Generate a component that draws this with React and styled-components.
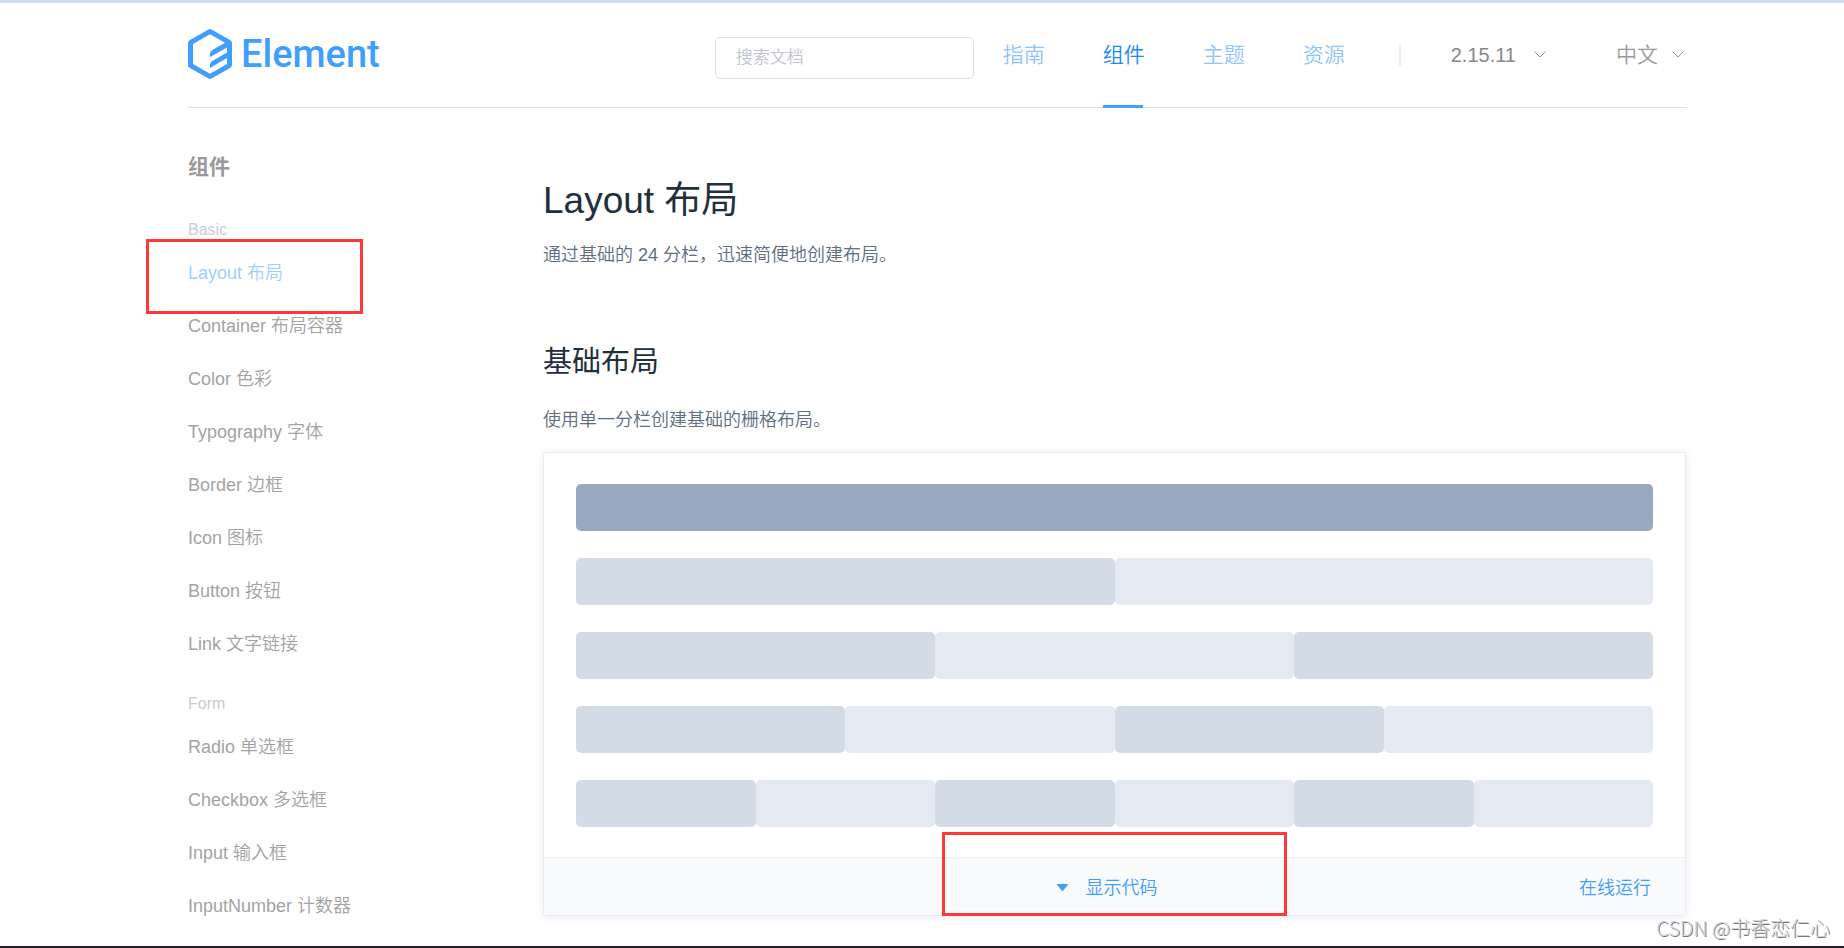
import styled, { createGlobalStyle, css } from 'styled-components';

const primary = '#409eff';

const GlobalStyle = createGlobalStyle`
  *,
  *::before,
  *::after {
    box-sizing: border-box;
  }

  body {
    margin: 0;
    background: #fff;
    font-family: 'Liberation Sans', 'Noto Sans CJK SC', sans-serif;
    font-weight: 350;
  }

  a {
    text-decoration: none;
  }

  ul {
    list-style: none;
    margin: 0;
    padding: 0;
  }
`;

const Page = styled.div`
  position: relative;
  height: 100vh;
  padding-left: 30px;
  overflow: hidden;
  border-top: 3px solid #ccddf7;
  border-bottom: 2px solid #211f22;
`;

const Container = styled.div`
  width: 90%;
  max-width: 1498px;
  margin: 0 auto;
`;

const Header = styled.header`
  display: flex;
  align-items: center;
  height: 105px;
  border-bottom: 1px solid #dcdfe6;
`;

const Logo = styled.a`
  display: flex;
  align-items: center;
  gap: 9px;
  margin: 0 auto 2px 0;
  color: ${primary};
  font: 500 38px/50px Roboto, sans-serif;
`;

const Search = styled.input`
  width: 259px;
  height: 42px;
  margin-top: 6px;
  padding: 0 20px;
  border: 1px solid #dcdfe6;
  border-radius: 5px;
  background: #fff;
  color: #606266;
  font-family: inherit;
  font-size: 17px;
  font-weight: 350;
  outline: none;

  &::placeholder {
    color: #c0c4cc;
  }
`;

const Nav = styled.nav`
  display: flex;
  align-self: stretch;
  gap: 60px;
  margin-left: 29px;
`;

const NavLink = styled.a`
  width: 40px;
  height: 105px;
  line-height: 104px;
  font-size: 21px;
  white-space: nowrap;
  color: ${p => (p.$active ? '#1989fa' : '#8cc5ff')};
  border-bottom: 3px solid ${p => (p.$active ? primary : 'transparent')};
`;

const Separator = styled.span`
  width: 2px;
  height: 21px;
  margin: 0 50px 0 56px;
  background: #ebebeb;
`;

const Dropdown = styled.button`
  display: flex;
  align-items: center;
  gap: ${p => (p.$strong ? 18 : 14)}px;
  padding: 0 2px 0 0;
  border: 0;
  background: none;
  color: ${p => (p.$strong ? '#888' : '#999')};
  font-family: inherit;
  font-size: ${p => (p.$strong ? 20 : 21)}px;
  font-weight: 350;
  line-height: 30px;

  & + & {
    margin-left: 68px;
  }
`;

const Body = styled.div`
  display: flex;
`;

const Sidebar = styled.aside`
  flex: 0 0 355px;
  padding-top: 42px;
`;

const SideTitle = styled.h2`
  margin: 0 0 29px;
  font-size: 21px;
  font-weight: 700;
  line-height: 34px;
  color: #999;
`;

const Group = styled.section`
  margin-bottom: 16px;
`;

const GroupTitle = styled.h3`
  margin: 0;
  font-size: 16px;
  font-weight: 350;
  line-height: 34px;
  color: #ccc;
`;

const highlight = css`
  position: relative;

  &::after {
    content: '';
    position: absolute;
    border: 3px solid #fd3838;
    pointer-events: none;
  }
`;

const SideItem = styled.li`
  font-size: 18px;
  line-height: 53px;

  a {
    color: ${p => (p.$active ? '#a0cfff' : '#a3a3a3')};
  }

  ${p => p.$active && css`
    ${highlight}

    &::after {
      top: -8px;
      left: -42px;
      width: 217px;
      height: 75px;
    }
  `}
`;

const Content = styled.main`
  flex: 1;
  min-width: 0;
  padding-top: 66px;
  color: #5e6d82;
`;

const Title = styled.h1`
  margin: 0 0 12px;
  font-size: 37px;
  font-weight: 400;
  line-height: 54px;
  color: #1f2f3d;
`;

const Heading = styled.h2`
  margin: 71px 0 22px;
  font-size: 29px;
  font-weight: 400;
  line-height: 42px;
  color: #1f2f3d;
`;

const Text = styled.p`
  margin: 0 0 17px;
  font-size: 18px;
  line-height: 30px;
`;

const Demo = styled.section`
  border: 1px solid #ebebeb;
  border-radius: 3px;
  box-shadow: 0 0 10px rgba(232, 237, 250, 0.6), 0 2px 5px rgba(232, 237, 250, 0.5);
`;

const Rows = styled.div`
  display: grid;
  gap: 27px;
  padding: 31px 32px 30px;
`;

const Row = styled.div`
  display: flex;
`;

const Col = styled.div`
  flex: 1;
  height: 47px;
  border-radius: 5px;
  background: ${p => p.$color};
`;

const DemoFooter = styled.div`
  display: grid;
  grid-template-columns: 1fr 345px 1fr;
  align-items: center;
  height: 58px;
  padding-top: 2px;
  border-top: 1px solid #eaeefb;
  background: #f9fafc;
`;

const TextButton = styled.button`
  border: 0;
  padding: 0;
  background: none;
  color: ${primary};
  font-family: inherit;
  font-size: 18px;
  font-weight: 350;
  line-height: 30px;
`;

const ToggleButton = styled(TextButton)`
  grid-column: 2;
  display: flex;
  align-items: center;
  justify-content: center;
  gap: 17px;
  padding-right: 16px;
  ${highlight}

  &::after {
    top: -41px;
    left: 0;
    width: 345px;
    height: 84px;
  }
`;

const RunButton = styled(TextButton)`
  justify-self: end;
  margin-right: 34px;
`;

const Watermark = styled.span`
  position: absolute;
  right: 14px;
  bottom: 3px;
  font: 300 20px/30px 'Noto Sans CJK SC', sans-serif;
  color: #d4d4d4;
  text-shadow: 1px 1px 0 #777;
`;

const groups = [
  {
    title: 'Basic',
    items: [
      'Layout 布局',
      'Container 布局容器',
      'Color 色彩',
      'Typography 字体',
      'Border 边框',
      'Icon 图标',
      'Button 按钮',
      'Link 文字链接',
    ],
  },
  {
    title: 'Form',
    items: ['Radio 单选框', 'Checkbox 多选框', 'Input 输入框', 'InputNumber 计数器'],
  },
];

const navItems = ['指南', '组件', '主题', '资源'];

const colColor = (count, i) => {
  if (count === 1) return '#99a9bf';
  return i % 2 ? '#e5e9f2' : '#d3dce6';
};

function LogoMark() {
  return (
    <svg width="44" height="50" viewBox="0 0 44 50" fill={primary} aria-hidden="true">
      <path
        fillRule="evenodd"
        d="M20.5 .4Q22 -.4 23.5 .4L42.5 11.3Q44 12.2 44 14V36Q44 37.8 42.5 38.7L23.5 49.6Q22 50.4 20.5 49.6L1.5 38.7Q0 37.8 0 36V14Q0 12.2 1.5 11.3ZM22 5.3L5 15V35L22 44.7L39 35V29L22 39V35.5Q22 33.5 24 32.3L39 23.5V18.5L22 28V24.5Q22 22.5 24 21.3L37 13.8Z"
      />
    </svg>
  );
}

function Chevron() {
  return (
    <svg width="12" height="8" viewBox="0 0 12 8" fill="none" stroke="currentColor" aria-hidden="true">
      <path d="M.5 .5L6 6L11.5 .5" />
    </svg>
  );
}

export default function App() {
  return (
    <>
      <GlobalStyle />
      <Page>
        <Container>
          <Header>
            <Logo href="#">
              <LogoMark />
              Element
            </Logo>
            <Search type="text" placeholder="搜索文档" aria-label="搜索文档" />
            <Nav>
              {navItems.map(item => (
                <NavLink key={item} href="#" $active={item === '组件'}>{item}</NavLink>
              ))}
            </Nav>
            <Separator />
            <Dropdown type="button" $strong>2.15.11 <Chevron /></Dropdown>
            <Dropdown type="button">中文 <Chevron /></Dropdown>
          </Header>

          <Body>
            <Sidebar>
              <SideTitle>组件</SideTitle>
              {groups.map(group => (
                <Group key={group.title}>
                  <GroupTitle>{group.title}</GroupTitle>
                  <ul>
                    {group.items.map(item => (
                      <SideItem key={item} $active={item === 'Layout 布局'}>
                        <a href="#">{item}</a>
                      </SideItem>
                    ))}
                  </ul>
                </Group>
              ))}
            </Sidebar>

            <Content>
              <Title>Layout 布局</Title>
              <Text>通过基础的 24 分栏，迅速简便地创建布局。</Text>
              <Heading>基础布局</Heading>
              <Text>使用单一分栏创建基础的栅格布局。</Text>
              <Demo>
                <Rows>
                  {[1, 2, 3, 4, 6].map(count => (
                    <Row key={count}>
                      {Array.from({ length: count }, (_, i) => (
                        <Col key={i} $color={colColor(count, i)} />
                      ))}
                    </Row>
                  ))}
                </Rows>
                <DemoFooter>
                  <ToggleButton type="button">
                    <svg width="13" height="8" viewBox="0 0 13 8" fill="currentColor" aria-hidden="true">
                      <path d="M.5 0H12.5L6.5 7.5Z" />
                    </svg>
                    显示代码
                  </ToggleButton>
                  <RunButton type="button">在线运行</RunButton>
                </DemoFooter>
              </Demo>
            </Content>
          </Body>
        </Container>
        <Watermark>CSDN @书香恋仁心</Watermark>
      </Page>
    </>
  );
}
